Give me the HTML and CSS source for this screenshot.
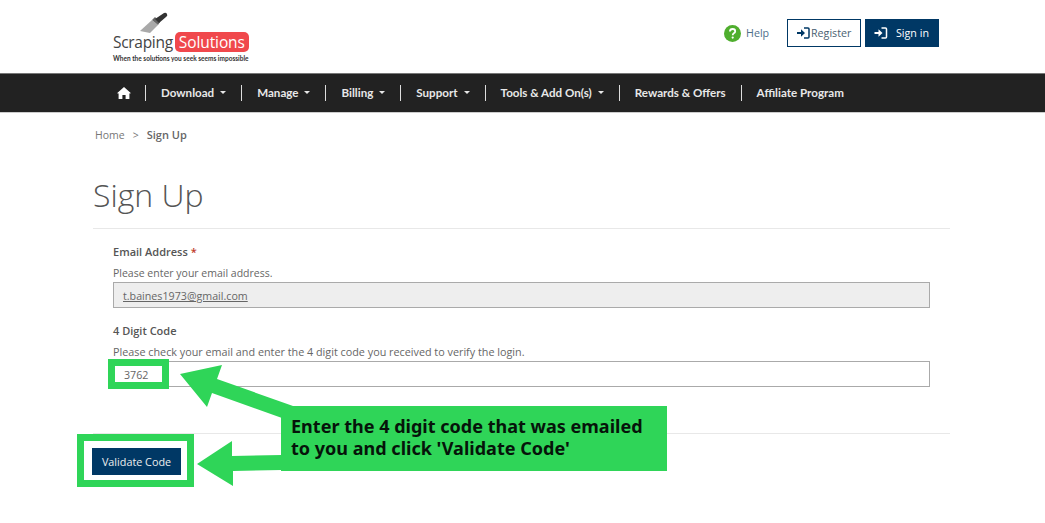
FILE: index.html
```html
<!DOCTYPE html>
<html lang="en">
<head>
<meta charset="utf-8">
<title>Sign Up</title>
<link rel="stylesheet" href="styles.css">
</head>
<body>
<header class="top">
  <div class="logo">
    <svg class="scraper" width="60" height="36" viewBox="0 0 60 36">
      <path d="M19 19 L31 8 L37 13 L29 21 Z" fill="#a9a9a9"/>
      <path d="M31 8 L34 5 L39 10 L37 13 Z" fill="#666"/>
      <path d="M34 7 L43 1 Q45 0 46 2 Q47 4 45 5 L38 11 Z" fill="#333"/>
    </svg>
    <div class="logo-row"><span class="logo-a">Scraping</span><span class="logo-b">Solutions</span></div>
    <div class="logo-tag">When the solutions you seek seems impossible</div>
  </div>
  <div class="top-actions">
    <svg class="help-icon" width="17" height="17" viewBox="0 0 17 17"><circle cx="8.5" cy="8.5" r="8.5" fill="#4fae2e"/><path d="M5.9 6.5 Q6 4 8.6 4 Q11.2 4 11.2 6.2 Q11.2 7.5 9.8 8.3 Q8.7 9 8.7 10.2" fill="none" stroke="#fff" stroke-width="1.8"/><circle cx="8.7" cy="12.6" r="1.1" fill="#fff"/></svg>
    <span class="help">Help</span>
    <a class="btn btn-outline">
      <svg width="13" height="12" viewBox="0 0 13 12"><path d="M0 5 H4 V2.2 L8 6 L4 9.8 V7 H0 Z" fill="#003865"/><path d="M7 1 H11 Q12 1 12 2 V10 Q12 11 11 11 H7" fill="none" stroke="#003865" stroke-width="1.5"/></svg>
      Register
    </a>
    <a class="btn btn-solid">
      <svg width="14" height="12" viewBox="0 0 13 12"><path d="M0 5 H4 V2.2 L8 6 L4 9.8 V7 H0 Z" fill="#fff"/><path d="M7 1 H11 Q12 1 12 2 V10 Q12 11 11 11 H7" fill="none" stroke="#fff" stroke-width="1.5"/></svg>
      <span>Sign in</span>
    </a>
  </div>
</header>
<nav class="nav">
  <svg class="home" width="14" height="12" viewBox="0 0 14 12"><path d="M7 0 L14 6.2 L12.4 6.6 V12 H8.6 V8 H5.4 V12 H1.6 V6.6 L0 6.2 Z" fill="#fff"/></svg>
  <a class="item">Download<i class="caret"></i></a>
  <a class="item">Manage<i class="caret"></i></a>
  <a class="item">Billing<i class="caret"></i></a>
  <a class="item">Support<i class="caret"></i></a>
  <a class="item">Tools &amp; Add On(s)<i class="caret"></i></a>
  <a class="item">Rewards &amp; Offers</a>
  <a class="item">Affiliate Program</a>
</nav>
<main class="main">
  <div class="crumbs">Home<span class="sep">&gt;</span><b>Sign Up</b></div>
  <h1 class="title">Sign Up</h1>
  <form class="form">
    <div class="label">Email Address <span class="req">*</span></div>
    <div class="hint">Please enter your email address.</div>
    <div class="input input-off"><u>t.baines1973@gmail.com</u></div>
    <div class="label">4 Digit Code</div>
    <div class="hint hint-long">Please check your email and enter the 4 digit code you received to verify the login.</div>
    <div class="input input-code">3762</div>
  </form>
  <div class="actions"><a class="validate">Validate Code</a></div>
</main>
<div class="frame frame-code"></div>
<div class="frame frame-btn"></div>
<svg class="arrows" width="1045" height="523" viewBox="0 0 1045 523">
  <path d="M180 374 L222 365 L217 379 L293 406 L282 418 L212 393 L207 407 Z" fill="#2fd558"/>
  <path d="M197 464 L232 441 L232 456 L282 455 L282 470 L233 471 L233 486 Z" fill="#2fd558"/>
</svg>
<div class="callout">Enter the 4 digit code that was emailed<br>to you and click 'Validate Code'</div>
</body>
</html>
```

FILE: styles.css
```css
* { box-sizing: border-box; }
html, body { margin: 0; padding: 0; }
body {
  position: relative;
  width: 1045px;
  height: 523px;
  overflow: hidden;
  background: #fff;
  color: #666;
  font-family: "Open Sans", "Noto Sans", sans-serif;
  font-size: 10.5px;
}
.top {
  height: 73px;
  display: flex;
  justify-content: space-between;
  padding: 12px 106px 0 113px;
}
.logo { position: relative; width: 140px; padding-top: 20px; }
.scraper { position: absolute; left: 8px; top: 0; }
.logo-row { display: flex; align-items: center; height: 20px; }
.logo-a { font-size: 15.5px; color: #444; letter-spacing: -0.3px; }
.logo-b {
  margin-left: 2px;
  padding: 0 4px;
  height: 20px;
  line-height: 20px;
  background: #f0484c;
  color: #fff;
  border-radius: 5px;
  font-size: 15.5px;
  letter-spacing: -0.1px;
}
.logo-tag {
  margin-top: 2px;
  font-family: "Lato", sans-serif;
  font-weight: 700;
  font-size: 6.5px;
  line-height: 9px;
  color: #333;
  white-space: nowrap;
}
.top-actions { display: flex; align-items: flex-start; padding-top: 7px; }
.help-icon { margin: 6px 5px 0 0; }
.help { margin-top: 6px; width: 41px; font-size: 10.7px; line-height: 16px; color: #4f6f8a; }
.btn {
  height: 28px;
  display: flex;
  align-items: center;
  font-size: 10.7px;
}
.btn-outline {
  width: 74px;
  margin-right: 4px;
  padding-left: 9px;
  gap: 1px;
  border: 1px solid #003865;
  color: #4a5f72;
}
.btn-solid {
  width: 74px;
  padding-left: 9px;
  padding-bottom: 1px;
  gap: 8px;
  background: #003865;
  color: #fff;
}
.nav {
  height: 40px;
  display: flex;
  align-items: center;
  padding-left: 117px;
  padding-bottom: 1px;
  background: #222;
  border-top: 1px solid #777;
  border-bottom: 1px solid #ccc;
}
.home { flex: none; margin-right: 14px; }
.item {
  display: flex;
  align-items: center;
  height: 16px;
  padding: 0 15px;
  border-left: 1px solid #ddd;
  font-family: "Lato", sans-serif;
  font-weight: 700;
  font-size: 11.6px;
  color: #e8e8e8;
  white-space: nowrap;
}
.caret {
  width: 0;
  height: 0;
  margin-left: 6px;
  border-left: 3px solid transparent;
  border-right: 3px solid transparent;
  border-top: 3px solid #e8e8e8;
}
.main { padding: 15px 95px 0 93px; }
.crumbs { padding-left: 2px; font-size: 10.5px; line-height: 14px; color: #777; }
.crumbs b { font-weight: 600; font-size: 11px; color: #666; }
.sep { margin: 0 8px; }
.title {
  margin: 29px 0 0;
  height: 58px;
  font-weight: 300;
  font-size: 32px;
  line-height: 48px;
  color: #555;
  border-bottom: 1px solid #e8e8e8;
}
.form { padding: 0 20px; }
.label { margin-top: 15px; font-weight: 600; font-size: 11px; line-height: 15px; color: #555; }
.req { color: #c0392b; }
.hint { margin-top: 7px; font-size: 10.5px; line-height: 15px; color: #666; }
.hint-long { margin-top: 6px; font-size: 10.8px; }
.input {
  height: 26px;
  margin-top: 1px;
  padding-left: 10px;
  line-height: 27px;
  font-size: 10.7px;
  border: 1px solid #aaa;
  color: #666;
}
.input-off { background: #eee; padding-left: 9px; }
.input-code { margin-top: 2px; }
.actions { margin-top: 46px; padding-top: 14px; border-top: 1px solid #e8e8e8; }
.validate {
  display: block;
  width: 89px;
  height: 27px;
  margin-left: -1px;
  line-height: 27px;
  text-align: center;
  background: #003865;
  color: #eee;
  font-size: 10.8px;
}
.frame { position: absolute; border: 7px solid #2fd558; }
.frame-code { left: 108px; top: 359px; width: 61px; height: 30px; }
.frame-btn { left: 77px; top: 434px; width: 117px; height: 53px; }
.arrows { position: absolute; left: 0; top: 0; }
.callout {
  position: absolute;
  left: 281px;
  top: 406px;
  width: 386px;
  height: 65px;
  padding: 9px 0 0 10px;
  background: #2fd558;
  color: #06140a;
  font-family: "Noto Sans", sans-serif;
  font-weight: 700;
  font-size: 18.05px;
  line-height: 22px;
  white-space: nowrap;
}
```
